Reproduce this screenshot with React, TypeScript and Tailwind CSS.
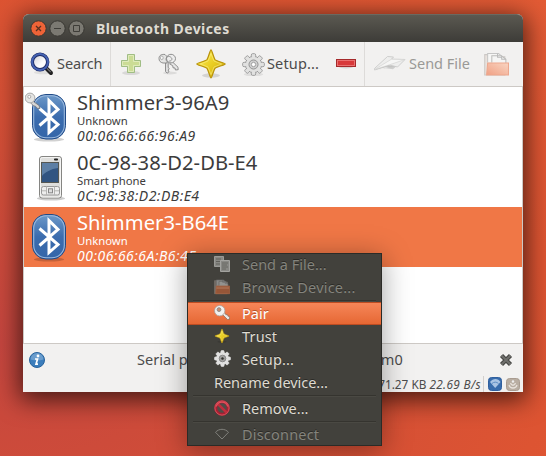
import React from "react";

const Search = () => (
  <svg width="24" height="24" viewBox="0 0 24 24" className="shrink-0">
    <defs>
      <linearGradient id="lens" x1="0" y1="0" x2="1" y2="1">
        <stop offset="0" stopColor="#c9c9d2" /><stop offset=".6" stopColor="#fdfdfd" />
      </linearGradient>
    </defs>
    <ellipse cx="13" cy="20.5" rx="9" ry="1.8" fill="#000" opacity=".08" />
    <path d="M16 16l5 5" stroke="#222" strokeWidth="4" strokeLinecap="round" />
    <path d="M16.5 15.8l3.8 3.8" stroke="#77777a" strokeWidth="1.2" strokeLinecap="round" />
    <circle cx="10" cy="10" r="7.700" fill="url(#lens)" stroke="#1d2b66" strokeWidth="3.400" />
    <circle cx="10" cy="10" r="7.900" fill="none" stroke="#4664b4" strokeWidth="2" />
  </svg>
);

const Plus = () => (
  <svg width="22" height="24" viewBox="0 0 22 24" className="shrink-0">
    <ellipse cx="11" cy="21" rx="9" ry="2" fill="#000" opacity=".1" />
    <path d="M7.5 2.5h7v6h6v6h-6v6h-7v-6h-6v-6h6z" fill="#cbdc95" stroke="#a0bd85" />
    <path d="M8.5 3.5h5v6h6v4h-6v6h-5v-6h-6v-4h6z" fill="none" stroke="#e2ecc0" strokeWidth=".9" />
  </svg>
);

const Keys = () => (
  <svg width="24" height="24" viewBox="0 0 24 24" className="shrink-0">
    <ellipse cx="13" cy="21" rx="7" ry="1.5" fill="#000" opacity=".09" />
    <path d="M8.500 9.500v10l1.700 1.600 1.800-1.400-.8-1.600 1-1.300-1-1.600V9z" fill="#dedede" stroke="#777" strokeWidth=".8" />
    <path d="M2 6.500C2 3 5 2 8 2.500l3 3-1 5.500H6C3.500 10.500 2 9 2 6.500z" fill="#e4e4e3" stroke="#858585" strokeWidth=".9" />
    <path d="M15 9.500l6 5.700.2 2.500-2.800.3-.4-2-2-.2-.2-2-3.200-2z" fill="#e6e6e6" stroke="#777" strokeWidth=".8" />
    <ellipse cx="14" cy="6.600" rx="4.500" ry="4.300" fill="#ededed" stroke="#858585" strokeWidth=".9" />
    <ellipse cx="4.800" cy="5.800" rx="1.400" ry="1.800" fill="#fafafa" stroke="#999" strokeWidth=".7" />
    <path d="M10 9.500c-2.500-3 .5-6.500 3.500-4.500s.5 4.500-1.500 4" fill="none" stroke="#888" strokeWidth=".9" />
  </svg>
);

const Star = ({ size }: { size: number }) => (
  <svg width={size} height={size} viewBox="0 0 32 32" className="shrink-0">
    <defs>
      <linearGradient id="gold" x1="0" y1="0" x2="1" y2="1">
        <stop offset="0" stopColor="#fff05a" /><stop offset=".55" stopColor="#e8cb20" /><stop offset="1" stopColor="#c79e08" />
      </linearGradient>
    </defs>
    <ellipse cx="16" cy="27.5" rx="9" ry="2.2" fill="#000" opacity=".12" />
    <path d="M16 1.800C17 1.800 18.500 9.500 20 11.600 22 13.500 30.200 15 30.200 16S22 18.500 20 20.400C18.500 22.500 17 30 16 30S13.500 22.500 12 20.400C10 18.500 1.800 17 1.800 16S10 13.500 12 11.600C13.500 9.500 15 1.800 16 1.800z" fill="url(#gold)" stroke="#b8920c" strokeWidth="1.2" />
    <path d="M16 5.500l3 7.500 7.600 3-7.600 3L16 26.500 13 19l-7.600-3 7.600-3z" fill="none" stroke="#fff8a0" strokeWidth=".8" opacity=".6" />
  </svg>
);

const teeth = [0, 45, 90, 135, 180, 225, 270, 315];
const Gear = ({ size, dark = false }: { size: number; dark?: boolean }) => (
  <svg width={size} height={size} viewBox="0.300 0.300 23.400 23.400" className="shrink-0">
    {!dark && <ellipse cx="12" cy="22" rx="10" ry="2" fill="#000" opacity=".08" />}
    {teeth.map((a) => (
      <rect key={a} x="9.800" y="1" width="4.400" height="6" rx="1.300" transform={`rotate(${a} 12 12)`} fill="#e1e1e0" stroke={dark ? "#ddd" : "#929292"} strokeWidth=".9" />
    ))}
    <circle cx="12" cy="12" r="8.300" fill="#e1e1e0" stroke={dark ? "#ddd" : "#929292"} strokeWidth=".9" />
    {teeth.map((a) => (
      <rect key={a} x="10.300" y="2" width="3.400" height="4" transform={`rotate(${a} 12 12)`} fill="#e1e1e0" />
    ))}
    <circle cx="12" cy="12" r="4.600" fill={dark ? "#a5a5a3" : "#cfcfcf"} stroke={dark ? "#777" : "#929292"} strokeWidth="1" />
    <circle cx="12" cy="12" r="2.200" fill={dark ? "#33332f" : "#fff"} stroke="#999" strokeWidth=".9" />
  </svg>
);

const Minus = () => (
  <svg width="20" height="12" viewBox="0 0 20 12" className="shrink-0">
    <ellipse cx="10" cy="9" rx="7" ry="1.500" fill="#000" opacity=".12" />
    <rect x=".5" y="1.500" width="19" height="7" fill="#d8393a" stroke="#a52a2b" />
    <rect x="1.500" y="2.500" width="17" height="5" fill="none" stroke="#ea7070" />
  </svg>
);

const Plane = () => (
  <svg width="34" height="20" viewBox="0 0 34 20" className="shrink-0">
    <path d="M1 17l10-3 9 1.200L27 9l-12 4z" fill="#cfcfce" />
    <path d="M1.500 14.500L14.500 2.500l6 .5-2 2.200L32 5.500 24.500 13l-8-2L1.500 16z" fill="#eeeeed" stroke="#c9c9c8" strokeWidth=".9" />
    <path d="M1.500 15.500L18.500 5.200 32 5.500l-15.500 5.300z" fill="#f6f6f5" stroke="#d4d4d3" strokeWidth=".7" />
    <path d="M2 15.700l14-4.400 6.500 1.700-6 .6-2.500-.8z" fill="#c3c3c2" />
  </svg>
);

const Folder = ({ size, dark = false }: { size: number; dark?: boolean }) => (
  <svg width={size} height={size} viewBox="0 0 24 24" className="shrink-0">
    <defs>
      <linearGradient id="peach" x1="1" y1="0" x2="0" y2="1">
        <stop offset="0" stopColor="#f9d6c3" /><stop offset="1" stopColor="#f0a084" />
      </linearGradient>
    </defs>
    <path d="M.7 22V2.500H5l2 2h13V22z" fill={dark ? "#746b64" : "#e9e2dd"} stroke={dark ? "#79736d" : "#ccc8c5"} />
    <path d="M3.500 10V1.500H14L18 5v5" fill={dark ? "#8a8a88" : "#f6f6f5"} stroke={dark ? "#686866" : "#c5c5c5"} />
    <path d="M7.500 10V3.500h9L21 7v4h-13" fill={dark ? "#92928f" : "#f5f5f4"} stroke={dark ? "#62625f" : "#bdbdbb"} />
    <path d="M13 1.500V5h4M17 3.500V7h4" fill="none" stroke={dark ? "#666" : "#bbb"} />
    <path d="M3.500 10.500h20v11.500h-21z" fill={dark ? "#965638" : "url(#peach)"} stroke={dark ? "#aa6542" : "#eda78d"} />
    {dark && <path d="M3.800 11.500h19V15H3.500z" fill="#a96e50" opacity=".8" />}
  </svg>
);

const Bluetooth = ({ badge = false }: { badge?: boolean }) => (
  <svg width="46" height="52" viewBox="0 0 46 52" className="shrink-0">
    <defs>
      <linearGradient id="bt" x1="0" y1="0" x2="0" y2="1">
        <stop offset="0" stopColor="#6d99c9" /><stop offset=".5" stopColor="#3b6cae" /><stop offset="1" stopColor="#3466a9" />
      </linearGradient>
    </defs>
    <ellipse cx="24" cy="47.500" rx="15" ry="2" fill="#000" opacity=".18" />
    <rect x="7.500" y="2.500" width="33" height="44.500" rx="13.500" fill="url(#bt)" stroke="#204a87" />
    <rect x="8.700" y="3.700" width="30.600" height="42.100" rx="12.500" fill="none" stroke="#99b8dc" strokeWidth="1.100" />
    <path d="M14.500 16.500L33 32.500 24 40.500V8.500L33 17.500 14.500 33.500" fill="none" stroke="#fff" strokeWidth="3" strokeLinejoin="miter" />
    {badge && (
      <g transform="translate(-1 -.5)">
        <path d="M8 9l7 5 1 3-3-.3-1.500-2-2-.4-3-3z" fill="#d6d6d6" stroke="#777" strokeWidth=".8" />
        <circle cx="6" cy="6.500" r="4.900" fill="#e5e5e3" stroke="#a9a9a8" />
        <circle cx="5.300" cy="5.300" r="1.500" fill="#fff" stroke="#999" strokeWidth=".8" />
      </g>
    )}
  </svg>
);

const Phone = () => (
  <svg width="46" height="52" viewBox="0 0 46 52" className="shrink-0">
    <ellipse cx="26" cy="46.500" rx="14" ry="2" fill="#000" opacity=".2" />
    <rect x="14.500" y="4.500" width="22" height="41.500" rx="2.500" fill="#dededc" stroke="#858582" />
    <rect x="15.500" y="5.500" width="20" height="39.500" rx="2" fill="none" stroke="#f4f4f3" />
    <rect x="29" y="6.500" width="4" height="2" rx=".8" fill="#222" />
    <rect x="16.500" y="10.500" width="17" height="20" fill="#315481" stroke="#555753" />
    <path d="M17 11h16v5c-7 1-13 4-16 8z" fill="#7191b5" opacity=".7" />
    <rect x="16.500" y="34.500" width="18" height="8.500" rx="2" fill="#eee" stroke="#999" />
    <path d="M21.500 34.500v8.500M29.500 34.500v8.500M17 38.800h4M30 38.800h4" stroke="#b5b5b3" fill="none" />
    <rect x="23.500" y="36.800" width="4" height="4" fill="#ddd" stroke="#888" />
  </svg>
);

const Docs = () => (
  <svg width="16" height="16" viewBox="0 0 16 16" className="shrink-0">
    <path d="M.5.500h9v10h-9z" fill="#888884" stroke="#9a9a96" />
    <path d="M2 3h5M2 5.500h4M2 8h4" stroke="#60605b" />
    <path d="M6.500 4.500h9v11h-9z" fill="#888884" stroke="#a3a39f" />
    <path d="M8 7h6M8 9h5M8 11h6M8 13h4" stroke="#65655f" strokeWidth=".9" />
  </svg>
);

const Key = () => (
  <svg width="16" height="16" viewBox="0 0 16 16" className="shrink-0">
    <path d="M8 9l5.500 5.500 2-.2.200-2.800-1.700-.3-.5-1.500-1.700-.1L10 7z" fill="#e8e8e6" stroke="#8a6a5c" strokeWidth=".7" />
    <circle cx="5.700" cy="5.700" r="5.200" fill="#f1f1f0" stroke="#a8a09c" strokeWidth=".8" />
    <circle cx="5" cy="4.600" r="1.900" fill="#c98c70" stroke="#8e8e8b" strokeWidth="1" />
  </svg>
);

const Stop = () => (
  <svg width="16" height="16" viewBox="0 0 16 16" className="shrink-0">
    <circle cx="8" cy="8" r="6.300" fill="#504b48" stroke="#a91f31" strokeWidth="3" />
    <path d="M3.600 3.600l8.800 8.800" stroke="#bf2e3c" strokeWidth="2.600" />
    <circle cx="8" cy="8" r="7.100" fill="none" stroke="#e0606a" strokeWidth=".8" />
    <path d="M2.200 6.500a6 6 0 0 1 11.600 0" fill="none" stroke="#e0525c" strokeWidth="1.200" />
  </svg>
);

const Signal = () => (
  <svg width="16" height="16" viewBox="0 0 16 16" className="shrink-0">
    <path d="M1.500 6.300C5 2.300 11 2.300 14.500 6.300L8 13z" fill="none" stroke="#80807b" strokeWidth="1" strokeLinejoin="round" />
  </svg>
);

function Item({ icon, label, off, sel, tracking, pad = "pb-[2px]" }: { icon?: React.ReactNode; label: string; off?: boolean; sel?: boolean; tracking: string; pad?: string }) {
  return (
    <div className={`flex h-[23px] items-center pl-[26px] ${pad} ${sel ? "border-y border-[#bd4c22] bg-linear-to-b from-[#f68658] to-[#e66733] text-white" : off ? "text-[#84847d]" : "text-[#dfdbd2]"}`}>
      {icon && <span className="mr-3 flex w-4 justify-center">{icon}</span>}
      <span className={`whitespace-nowrap text-[14.500px] leading-[20px] ${sel ? "[text-shadow:0_-1px_0_#b5532c]" : "[text-shadow:0_-1px_0_#2b2a26]"} ${tracking}`}>{label}</span>
    </div>
  );
}

const Separator = () => <div className="mx-[5px] h-[3px] pt-px"><div className="h-[2px] border-t border-b border-t-[#35342f] border-b-[#4a4943]" /></div>;

function Device({ icon, name, kind, mac, sel }: { icon: React.ReactNode; name: string; kind: string; mac: string; sel?: boolean }) {
  return (
    <div className={`flex h-[60px] ${sel ? "bg-[#f07746] text-white" : "text-[#3c3c3c]"}`}>
      <div className="w-[53px] pl-px pt-[5px]">{icon}</div>
      <div className="whitespace-nowrap pt-[3px]">
        <div className="text-[20.200px] leading-[24px] tracking-[0.030px]">{name}</div>
        <div className="text-[11.300px] leading-[13px]">{kind}</div>
        <div className="text-[14px] italic leading-[17px] tracking-[0.480px]">{mac}</div>
      </div>
    </div>
  );
}

export default function App() {
  return (
    <div className="relative h-[456px] w-[546px] overflow-hidden bg-[radial-gradient(ellipse_at_0%_75%,#c5463f_0%,#d24e37_40%,#dd5432_72%,#e25b35_100%)] pl-[23px] pt-[14px] font-['Noto_Sans',sans-serif]">
      <div className="flex h-[378px] w-[500px] flex-col rounded-t-[6px] bg-[#f2f1f0] text-[#4c4c4c] shadow-[0_5px_24px_3px_rgba(0,0,0,0.65)]">
        <header className="flex h-7 items-center rounded-t-[6px] border-t border-[#6b6961] bg-linear-to-b from-[#5b5951] to-[#3d3c38] pl-[7px]">
          <svg width="56" height="18" viewBox="0 0.500 56 18" className="shrink-0">
            <circle cx="8.500" cy="9" r="7.700" fill="#ee6337" stroke="#383732" />
            <path d="M6 6.500l5 5M11 6.500l-5 5" stroke="#59301f" strokeWidth="1.300" />
            <circle cx="27.500" cy="9" r="7.700" fill="#7b7972" stroke="#383732" />
            <path d="M24 9h7" stroke="#3e3d38" />
            <circle cx="46.500" cy="9" r="7.700" fill="#7b7972" stroke="#383732" />
            <path d="M43.500 6h6v6h-6z" fill="none" stroke="#3e3d38" />
          </svg>
          <h1 className="ml-[10px] whitespace-nowrap text-[14px] font-bold leading-5 tracking-[0.420px] text-[#dfdbd2]">Bluetooth Devices</h1>
        </header>
        <div className="flex h-[45px] items-center whitespace-nowrap border-b border-[#cdc9c5] text-[14.500px]">
          <div className="flex h-full w-[88px] items-center border-r border-[#dddbd9] pl-[7px]">
            <Search /><span className="ml-[3px] tracking-[-0.080px]">Search</span>
          </div>
          <div className="flex h-full w-[254px] items-center border-r border-[#dddbd9] pl-[9px]">
            <Plus />
            <div className="ml-[15px]"><Keys /></div>
            <div className="ml-[14px]"><Star size={32} /></div>
            <div className="ml-[15px]"><Gear size={23} /></div>
            <span className="ml-[2px] tracking-[0.150px]">Setup...</span>
            <div className="ml-auto mr-[8px]"><Minus /></div>
          </div>
          <div className="flex grow items-center pl-[8px] text-[#9a9996]">
            <Plane /><span className="ml-[2px]">Send File</span>
            <div className="ml-auto mr-[14px]"><Folder size={25} /></div>
          </div>
        </div>
        <main className="h-[257px] border-x border-b border-[#cdc9c5] bg-white">
          <Device icon={<Bluetooth badge />} name="Shimmer3-96A9" kind="Unknown" mac="00:06:66:66:96:A9" />
          <Device icon={<Phone />} name="0C-98-38-D2-DB-E4" kind="Smart phone" mac="0C:98:38:D2:DB:E4" />
          <Device icon={<Bluetooth />} name="Shimmer3-B64E" kind="Unknown" mac="00:06:66:6A:B6:4E" sel />
        </main>
        <div className="flex h-8 items-center pl-[6px] pr-[10px]">
          <svg width="16" height="16" viewBox="0 0 16 16" className="shrink-0">
            <circle cx="8" cy="8" r="7.500" fill="#3c7ebc" stroke="#28639c" />
            <path d="M1.500 7.500a6.500 6.500 0 0 1 13 0q-6 2-13 0" fill="#8bb2d8" opacity=".6" />
            <circle cx="9" cy="4" r="1.400" fill="#fff" />
            <path d="M6 7h2.500l-1.500 5.200h2" fill="none" stroke="#fff" strokeWidth="1.700" />
          </svg>
          <span className="ml-[92px] w-[267px] whitespace-nowrap text-[14.500px] tracking-[0.050px]">Serial port connected to /dev/rfcomm0</span>
          <svg width="14" height="14" viewBox="0 0 14 14" className="ml-auto shrink-0">
            <path d="M2.500 2.500l9 9M11.500 2.500l-9 9" stroke="#474744" strokeWidth="4.400" />
            <path d="M2.500 2.500l9 9M11.500 2.500l-9 9" stroke="#70706d" strokeWidth="2" />
          </svg>
        </div>
        <footer className="flex h-4 items-center justify-end whitespace-nowrap pr-[3px] text-[11.800px] leading-4">
          <span>71.27 KB</span><span className="ml-[3px] italic tracking-[0.350px]">22.69 B/s</span>
          <span className="ml-[2px] mr-[4px] h-4 w-px bg-[#d3d0cd]" />
          <svg width="32" height="16" viewBox="0 0 32 16" className="shrink-0">
            <rect x=".5" y="1.500" width="13" height="13" rx="3" fill="#386cac" stroke="#2f5f9e" />
            <path d="M2 6c3-4 8-4 10.500 0L7.200 12z" fill="#a9c4e4" />
            <path d="M4 7.500c2-1.800 4.500-1.800 6.500 0" fill="none" stroke="#5e8dc4" />
            <rect x="18.500" y="2.500" width="13" height="12" rx="3" fill="#b9aea2" stroke="#a99c90" />
            <path d="M21 9c1 4 7 4 8 0M22.500 7c1 3 4 3 5 0" fill="none" stroke="#e7e1da" strokeWidth="1.300" />
            <circle cx="25" cy="5.500" r="1.200" fill="#eee" />
          </svg>
        </footer>
      </div>
      <nav className="absolute left-[187px] top-[253px] h-[193px] w-[195px] border border-[#2b2b27] bg-[#42413c] shadow-[0_4px_26px_1px_rgba(0,0,0,0.35)]">
        <Item icon={<Docs />} label="Send a File..." off tracking="tracking-normal" pad="pb-[3px]" />
        <Item icon={<Folder size={16} dark />} label="Browse Device..." off tracking="tracking-[0.200px]" pad="pb-[3px]" />
        <div className="-mt-px"><Separator /></div>
        <Item icon={<Key />} label="Pair" sel tracking="tracking-normal" pad="pb-px" />
        <Item icon={<Star size={16} />} label="Trust" tracking="tracking-[0.150px]" />
        <Item icon={<Gear size={17} dark />} label="Setup..." tracking="tracking-[0.150px]" />
        <Item label="Rename device..." tracking="tracking-[-0.040px]" />
        <Separator />
        <Item icon={<Stop />} label="Remove..." tracking="tracking-normal" />
        <Separator />
        <Item icon={<Signal />} label="Disconnect" off tracking="tracking-[0.200px]" />
      </nav>
    </div>
  );
}
